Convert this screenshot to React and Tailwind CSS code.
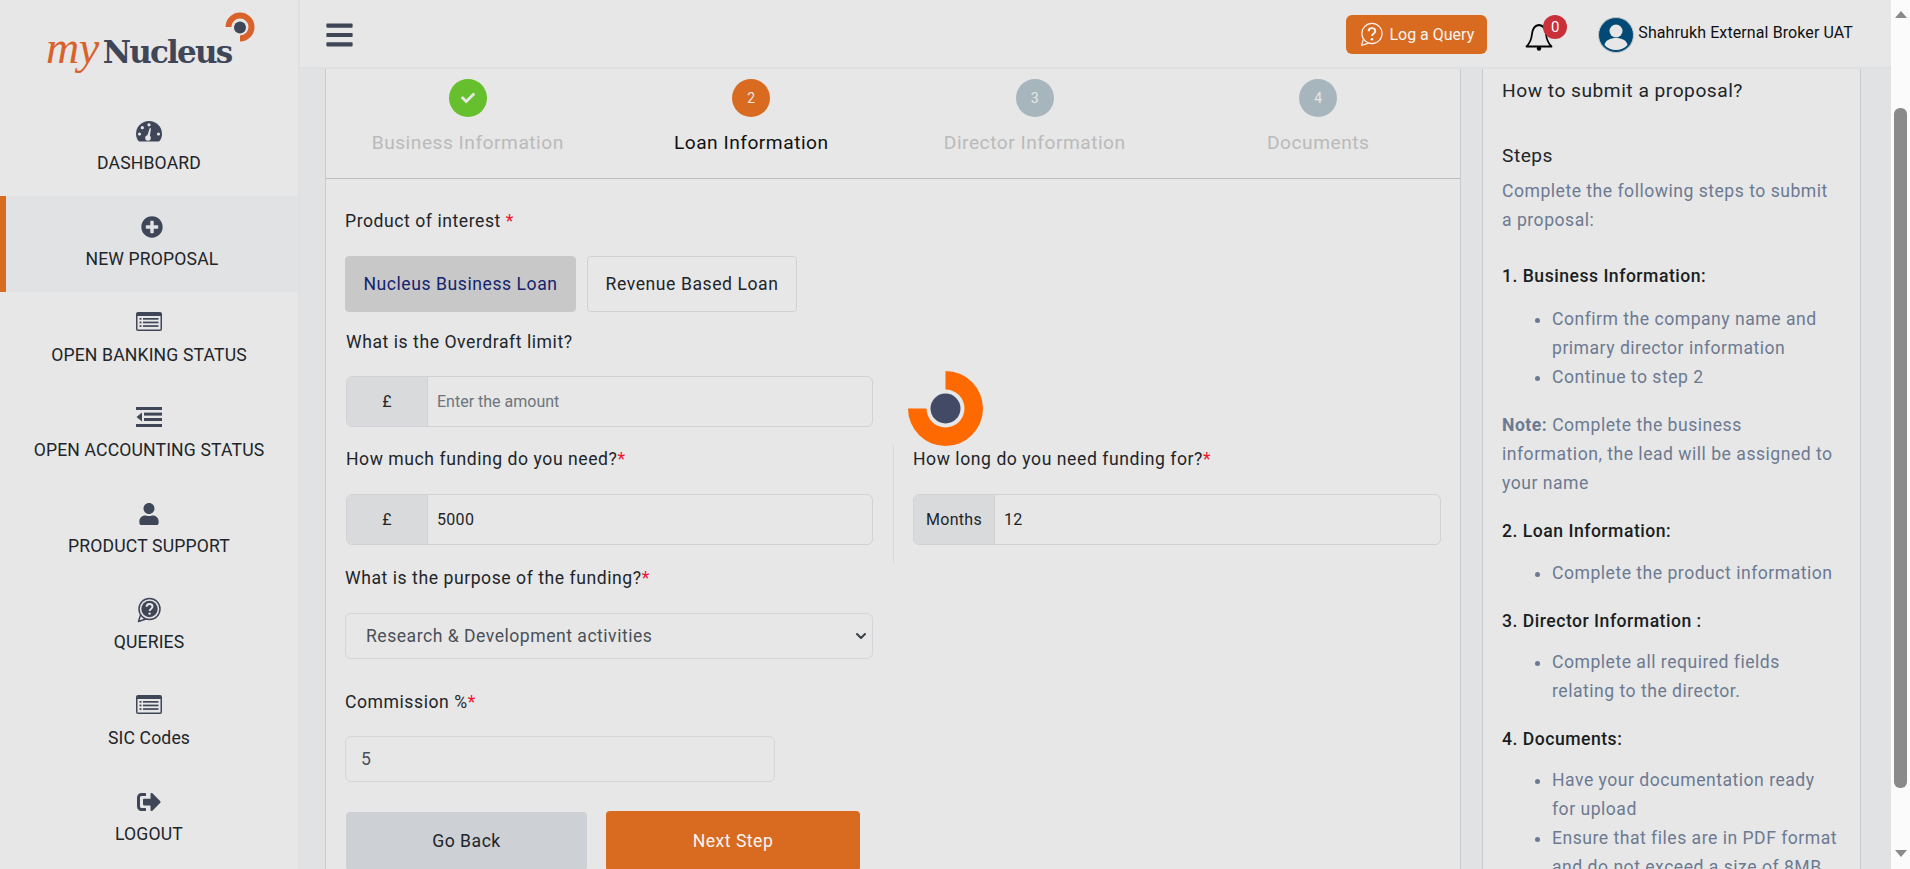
import { FaPlusCircle, FaUser, FaSignOutAlt, FaCheck, FaBars } from 'react-icons/fa';
import { ChevronDown } from 'lucide-react';

const GaugeIcon = () => (
  <svg viewBox="0 0 26 21" className="w-[26px] h-[21px]">
    <path d="M3 20.500 C1 18.500 0 15.800 0 13 A13 13 0 0 1 26 13 C26 15.800 25 18.500 23 20.500 Z" fill="currentColor" />
    <g fill="#e7e7e7">
      <circle cx="13" cy="3.800" r="1.600" />
      <circle cx="6.300" cy="6.700" r="1.600" />
      <circle cx="3.500" cy="13" r="1.600" />
      <circle cx="22.500" cy="13" r="1.600" />
      <circle cx="12" cy="17" r="2.800" />
      <path d="M10.800 16 L13.800 7 L15 7.400 L13.600 16.800 Z" />
    </g>
  </svg>
);

const ListIcon = () => (
  <svg viewBox="0 0 26 19" className="w-[26px] h-[19px] mb-[2px]">
    <rect x="0" y="0" width="26" height="19" rx="2" fill="currentColor" />
    <rect x="1.500" y="4" width="23" height="13.500" fill="#e7e7e7" />
    <g fill="currentColor">
      <rect x="3.500" y="6" width="2" height="1.700" />
      <rect x="3.500" y="9.600" width="2" height="1.700" />
      <rect x="3.500" y="13.200" width="2" height="1.700" />
      <rect x="7" y="6" width="15.500" height="1.700" />
      <rect x="7" y="9.600" width="15.500" height="1.700" />
      <rect x="7" y="13.200" width="15.500" height="1.700" />
    </g>
  </svg>
);

const OutdentIcon = () => (
  <svg viewBox="0 0 26 20" className="w-[26px] h-[20px] mb-[2px]" fill="currentColor">
    <rect x="0" y="0" width="26" height="3" />
    <rect x="8" y="5.600" width="18" height="3" />
    <rect x="8" y="11" width="18" height="3" />
    <rect x="0" y="17" width="26" height="3" />
    <path d="M6 5.500 L0.500 10 L6 14.500 Z" />
  </svg>
);

const BellIcon = () => (
  <svg viewBox="0 0 28 28" className="w-[28px] h-[28px] mt-[4px]">
    <path d="M14 2 C9 2.500 7.500 6.500 7 11 C6.500 16 5 20 1.500 23.500 H26.500 C23 20 21.500 16 21 11 C20.500 6.500 19 2.500 14 2 Z" fill="none" stroke="#000" strokeWidth="1.800" strokeLinejoin="round" />
    <circle cx="14" cy="25.500" r="2.200" fill="#000" />
  </svg>
);

const QueryIcon = ({ className = '' }) => (
  <svg viewBox="0 0 26 26" className={className} fill="none">
    <circle cx="13.5" cy="12" r="10.500" stroke="currentColor" strokeWidth="1.500" />
    <path d="M4.500 18 L2.500 24.500 L10 22" stroke="currentColor" strokeWidth="1.500" strokeLinejoin="round" />
    <circle cx="13.5" cy="12" r="8.200" fill="currentColor" />
    <path d="M10.600 9.800c0-1.700 1.300-2.800 3-2.800s2.900 1.100 2.900 2.600c0 2.300-2.900 2.300-2.900 4.400" stroke="#e7e7e7" strokeWidth="1.900" />
    <circle cx="13.6" cy="16.600" r="1.200" fill="#e7e7e7" />
  </svg>
);

const QueryIconOutline = ({ className = '' }) => (
  <svg viewBox="0 0 26 26" className={className} fill="none" stroke="currentColor">
    <circle cx="13.5" cy="12" r="10.500" strokeWidth="1.200" />
    <path d="M4.500 18 L2.500 24.500 L10 22" strokeWidth="1.200" strokeLinejoin="round" />
    <path d="M10 9.600c0-2 1.600-3.200 3.500-3.200s3.400 1.200 3.400 3c0 2.700-3.400 2.700-3.400 5.200" strokeWidth="2" />
    <circle cx="13.5" cy="18" r="1.300" fill="currentColor" stroke="none" />
  </svg>
);

const navItems = [
  { label: 'DASHBOARD', icon: <GaugeIcon /> },
  { label: 'NEW PROPOSAL', icon: <FaPlusCircle className="w-[22px] h-[22px]" />, active: true },
  { label: 'OPEN BANKING STATUS', icon: <ListIcon /> },
  { label: 'OPEN ACCOUNTING STATUS', icon: <OutdentIcon /> },
  { label: 'PRODUCT SUPPORT', icon: <FaUser className="w-[20px] h-[22px]" /> },
  { label: 'QUERIES', icon: <QueryIcon className="w-[26px] h-[26px]" /> },
  { label: 'SIC Codes', icon: <ListIcon /> },
  { label: 'LOGOUT', icon: <FaSignOutAlt className="w-[24px] h-[24px]" /> },
];

const steps = [
  { n: '1', label: 'Business Information', state: 'done' },
  { n: '2', label: 'Loan Information', state: 'active' },
  { n: '3', label: 'Director Information', state: 'todo' },
  { n: '4', label: 'Documents', state: 'todo' },
];

const Logo = () => (
  <div className="relative h-[100px]">
    <div className="absolute left-[46px] top-[23px] flex items-baseline whitespace-nowrap leading-[50px]">
      <span className="font-['Liberation_Serif'] italic text-[46px] text-[#d9622b] tracking-[-0.5px]">my</span>
      <span className="font-['DejaVu_Serif'] font-bold text-[31px] text-[#3f4658] tracking-[-1.8px] ml-[4px]">Nucleus</span>
    </div>
    <svg viewBox="0 0 32 32" className="absolute left-[224px] top-[11px] w-[32px] h-[32px]">
      <path d="M1.500 16 A14.500 14.500 0 1 1 16 30.500 L16 24.500 A8.500 8.500 0 1 0 7.500 16 Z" fill="#d9622b" />
      <circle cx="16" cy="16.500" r="6" fill="#3f4658" />
    </svg>
  </div>
);

const Sidebar = () => (
  <aside className="w-[300px] shrink-0 bg-[#e7e7e7] border-r-2 border-[#dfe0e2]">
    <Logo />
    {navItems.map(item => (
      <div
        key={item.label}
        className={`h-[95.8px] flex flex-col items-center ${item.active ? 'bg-[#e1e2e4] border-l-[6px] border-[#d96b20]' : ''}`}
      >
        <div className="h-[26px] mt-[18px] flex items-center justify-center text-[#3f4658]">{item.icon}</div>
        <div className="mt-[7px] text-[17.6px] leading-[24px] text-[#212529] tracking-[0.15px]">{item.label}</div>
      </div>
    ))}
  </aside>
);

const Header = () => (
  <header className="h-[69px] shrink-0 bg-[#e7e7e7] border-b-2 border-[#dfe0e2] flex items-center pt-[2px] pl-[25px] pr-[38px]">
    <FaBars className="w-[29px] h-[30px] text-[#3f4658]" />
    <div className="ml-auto w-[141px] h-[39px] rounded-[6px] bg-[#d96b20] text-[#f5f5f5] flex items-center justify-center gap-[5px] text-[16px]">
      <QueryIconOutline className="w-[25px] h-[25px]" />
      <span>Log a Query</span>
    </div>
    <div className="relative ml-[38px] w-[29px] h-[32px]">
      <BellIcon />
      <span className="absolute left-[18px] top-[-4px] w-[24px] h-[24px] rounded-full bg-[#c9303a] text-white text-[15px] leading-[24px] text-center">0</span>
    </div>
    <svg viewBox="0 0 36 36" className="ml-[44px] w-[36px] h-[38px]">
      <circle cx="18" cy="18" r="17.500" fill="#004a75" stroke="#c4c4c4" />
      <circle cx="18" cy="14" r="6.500" fill="#e7e7e7" />
      <path d="M6.500 28c1-5 6-7 11.500-7S28.500 23 29.500 28c-3 3.500-7 5-11.500 5s-8.500-1.500-11.500-5Z" fill="#e7e7e7" />
    </svg>
    <span className="ml-[4px] mb-[4px] text-[16px] tracking-[0.1px] text-[#111] whitespace-nowrap">Shahrukh External Broker UAT</span>
  </header>
);

const Stepper = () => (
  <div className="grid grid-cols-4 h-[110px] border-b border-[#bdbdbd] pt-[10px]">
    {steps.map(step => {
      const circle = step.state === 'done' ? 'bg-[#66bf2c]' : step.state === 'active' ? 'bg-[#d96b20]' : 'bg-[#a7b6bd]';
      return (
        <div key={step.n} className="flex flex-col items-center">
          <div className={`w-[38px] h-[38px] rounded-full flex items-center justify-center text-[#e7e7e7] text-[14px] ${circle}`}>
            {step.state === 'done' ? <FaCheck className="w-[14px] h-[14px]" /> : step.n}
          </div>
          <div className={`mt-[12px] text-[19.2px] leading-[27px] tracking-[0.5px] ${step.state === 'active' ? 'text-[#111]' : 'text-[#bababa]'}`}>
            {step.label}
          </div>
        </div>
      );
    })}
  </div>
);

const Req = () => <span className="text-[#f0142f]">*</span>;

const Label = ({ children, className = '' }) => (
  <div className={`text-[17.6px] leading-[24px] text-[#212529] tracking-[0.55px] ${className}`}>{children}</div>
);

const AddonInput = ({ addon, value, placeholder, className = 'mt-[23px]' }) => (
  <div className={`h-[51px] flex rounded-[6px] border border-[#d0d2d5] overflow-hidden ${className}`}>
    <div className="w-[81px] shrink-0 bg-[#d9dadc] border-r border-[#d0d2d5] flex items-center justify-center text-[16px] tracking-[0.3px] text-[#212529]">{addon}</div>
    {value
      ? <div className="flex-1 flex items-center pl-[9px] text-[16px] tracking-[0.3px] text-[#212529]">{value}</div>
      : <div className="flex-1 flex items-center pl-[9px] text-[16px] text-[#6c757d]">{placeholder}</div>}
  </div>
);

const LoanForm = () => (
  <div className="pl-[19px] pr-[18px] pt-[30px]">
    <Label>Product of interest <Req /></Label>
    <div className="mt-[23px] flex gap-[11px]">
      <div className="w-[231px] h-[56px] rounded-[4px] bg-[#c8c8c8] border border-[#c8c8c8] flex items-center justify-center text-[17.6px] text-[#14236e] tracking-[0.55px]">Nucleus Business Loan</div>
      <div className="w-[210px] h-[56px] rounded-[4px] border border-[#cfd1d4] flex items-center justify-center text-[17.6px] text-[#212529] tracking-[0.55px]">Revenue Based Loan</div>
    </div>
    <div className="w-[528px] pl-[1px]">
      <Label className="mt-[18px]">What is the Overdraft limit?</Label>
      <AddonInput addon="£" placeholder="Enter the amount" className="mt-[22px]" />
    </div>
    <div className="flex h-[117px] mt-[20px]">
      <div className="w-[528px] pl-[1px]">
        <Label>How much funding do you need?<Req /></Label>
        <AddonInput addon="£" value="5000" />
      </div>
      <div className="ml-[20px] -mt-[2px] h-[119px] w-[548px] border-l border-[#d5dae0] pt-[2px] pl-[19px]">
        <Label>How long do you need funding for?<Req /></Label>
        <AddonInput addon="Months" value="12" />
      </div>
    </div>
    <Label className="mt-[2px]">What is the purpose of the funding?<Req /></Label>
    <div className="mt-[23px] w-[528px] h-[46px] rounded-[6px] border border-[#d5d6d9] flex items-center pl-[20px] pr-[3px] text-[17.6px] tracking-[0.5px] text-[#4a5058]">
      Research &amp; Development activities
      <ChevronDown className="ml-auto w-[16px] h-[16px] text-[#3a3f47]" strokeWidth={3} />
    </div>
    <Label className="mt-[31px]">Commission %<Req /></Label>
    <div className="mt-[22px] w-[430px] h-[46px] rounded-[6px] border border-[#d5d6d9] flex items-center pl-[15px] text-[17.6px] text-[#4a5058]">5</div>
    <div className="mt-[29px] flex items-start">
      <div className="ml-[1px] mt-[1px] w-[241px] h-[58px] rounded-[4px] bg-[#cdd0d4] flex items-center justify-center text-[17.6px] tracking-[0.5px] text-[#212529]">Go Back</div>
      <div className="ml-[19px] w-[254px] h-[60px] rounded-[4px] bg-[#d96b20] flex items-center justify-center text-[17.6px] tracking-[0.5px] text-[#f5f5f5]">Next Step</div>
    </div>
  </div>
);

const HelpHeading = ({ children, className = '' }) => (
  <div className={`font-medium text-[17.6px] leading-[29px] tracking-[0.5px] text-[#1a1d21] ${className}`}>{children}</div>
);

const HelpList = ({ items, className = '' }) => (
  <ul className={`list-disc pl-[50px] marker:text-[#6c7a91] ${className}`}>
    {items.map(item => <li key={item}>{item}</li>)}
  </ul>
);

const HelpPanel = () => (
  <div className="w-[379px] shrink-0 h-[830px] border-x border-[#c9cbce] pl-[19px] pr-[20px] overflow-hidden text-[17.6px] leading-[29px] tracking-[0.5px] text-[#6c7a91]">
    <div className="mt-[8px] text-[19.2px] leading-[27px] text-[#212529]">How to submit a proposal?</div>
    <div className="mt-[38px] text-[19.2px] leading-[27px] text-[#212529]">Steps</div>
    <p className="mt-[8px]">Complete the following steps to submit a proposal:</p>
    <HelpHeading className="mt-[27px]">1. Business Information:</HelpHeading>
    <HelpList className="mt-[14px]" items={['Confirm the company name and primary director information', 'Continue to step 2']} />
    <p className="mt-[19px]"><span className="font-bold">Note:</span> Complete the business information, the lead will be assigned to your name</p>
    <HelpHeading className="mt-[19px]">2. Loan Information:</HelpHeading>
    <HelpList className="mt-[13px]" items={['Complete the product information']} />
    <HelpHeading className="mt-[19px]">3. Director Information :</HelpHeading>
    <HelpList className="mt-[12px]" items={['Complete all required fields relating to the director.']} />
    <HelpHeading className="mt-[19px]">4. Documents:</HelpHeading>
    <HelpList className="mt-[12px]" items={['Have your documentation ready for upload', 'Ensure that files are in PDF format and do not exceed a size of 8MB']} />
  </div>
);

const Spinner = () => (
  <svg viewBox="0 0 75 75" className="absolute left-[582px] top-[302px] w-[75px] h-[75px]">
    <path d="M37.500 0 A37.500 37.500 0 1 1 0 37.500 L18.500 37.500 A19 19 0 1 0 37.500 18.500Z" fill="#ff6a00" />
    <circle cx="37.500" cy="37.500" r="15" fill="#434a66" />
  </svg>
);

const Scrollbar = () => (
  <div className="w-[19px] shrink-0 bg-[#fbfbfb] flex flex-col items-center relative">
    <div className="mt-[11px] w-0 h-0 border-x-[6px] border-x-transparent border-b-[7px] border-b-[#8a8a8a]" />
    <div className="mt-[90px] w-[13px] h-[680px] rounded-[6px] bg-[#8a8a8a]" />
    <div className="mt-[62px] w-0 h-0 border-x-[6px] border-x-transparent border-t-[7px] border-t-[#8a8a8a]" />
  </div>
);

export default function App() {
  return (
    <div className="h-screen overflow-hidden flex font-['Roboto',sans-serif] bg-[#e1e2e4]">
      <Sidebar />
      <div className="flex-1 min-w-0 flex flex-col">
        <Header />
        <div className="flex-1 min-h-0 overflow-hidden flex items-start pl-[25px] gap-[21px]">
          <div className="relative w-[1136px] shrink-0 h-[830px] bg-[#e7e7e7] border-x border-[#c9cbce] overflow-hidden">
            <Stepper />
            <LoanForm />
            <Spinner />
          </div>
          <div className="bg-[#e7e7e7]"><HelpPanel /></div>
        </div>
      </div>
      <Scrollbar />
    </div>
  );
}
